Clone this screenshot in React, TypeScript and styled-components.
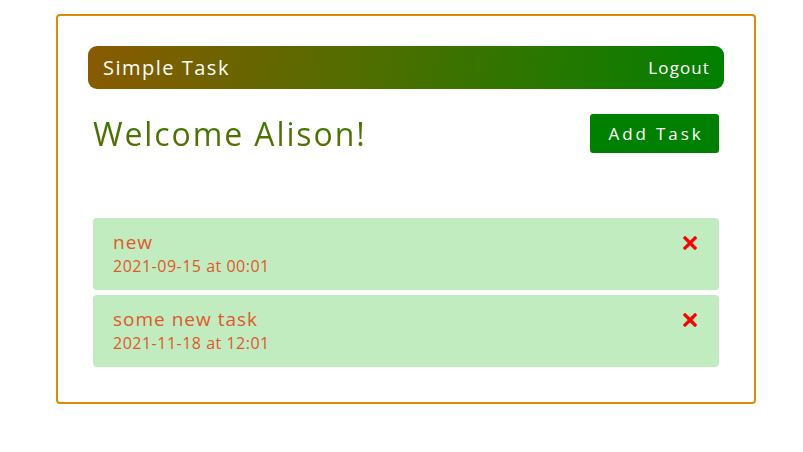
import React from "react";
import styled, { createGlobalStyle } from "styled-components";

const Global = createGlobalStyle`
  html, body { margin: 0; padding: 0; background: #fff; }
  body { font-family: "Open Sans", "Liberation Sans", sans-serif; }
  * { box-sizing: border-box; }
`;

const Page = styled.div`
  padding: 14px 0 0 56px;
`;

const Card = styled.div`
  width: 700px;
  height: 390px;
  border: 2px solid #dc8c06;
  border-radius: 4px;
  padding: 30px;
`;

const NavBar = styled.header`
  height: 43px;
  border-radius: 9px;
  background: linear-gradient(100deg, #8a5a00 0%, #4e6e00 45%, #008000 100%);
  display: flex;
  align-items: center;
  justify-content: space-between;
  padding: 0 15px;
  color: #fff;
`;

const Brand = styled.span`
  font-size: 20px;
  letter-spacing: 1.5px;
`;

const NavLink = styled.span`
  font-size: 17px;
  letter-spacing: 1.1px;
  margin-right: -1px;
`;

const Main = styled.main`
  padding: 0 5px;
`;

const TopRow = styled.div`
  display: flex;
  justify-content: space-between;
  align-items: flex-start;
  margin-top: 25px;
  height: 104px;
`;

const Welcome = styled.h1`
  margin: 0;
  font-size: 32px;
  font-weight: 400;
  line-height: 40px;
  letter-spacing: 1.9px;
  background: linear-gradient(180deg, #2a7e00 0%, #6a6800 100%);
  -webkit-background-clip: text;
  background-clip: text;
  color: transparent;
`;

const AddButton = styled.button`
  height: 39px;
  width: 129px;
  border: none;
  border-radius: 3px;
  background: #008000;
  color: #fff;
  font-family: inherit;
  font-size: 17px;
  letter-spacing: 2.9px;
  padding: 0 0 0 3px;
  cursor: pointer;
`;

const TaskList = styled.ul`
  list-style: none;
  margin: 0;
  padding: 0;
  display: flex;
  flex-direction: column;
  gap: 5px;
`;

const TaskItem = styled.li`
  height: 72px;
  border-radius: 4px;
  background: #c0ecc0;
  display: flex;
  justify-content: space-between;
  align-items: flex-start;
  padding: 11px 22px 0 20px;
  color: #e0582a;
`;

const TaskText = styled.div`
  display: flex;
  flex-direction: column;
`;

const TaskTitle = styled.span`
  font-size: 19px;
  line-height: 26px;
  letter-spacing: 1px;
`;

const TaskDate = styled.span`
  font-size: 16px;
  line-height: 22px;
  letter-spacing: 0.5px;
`;

const DeleteIcon = styled.svg`
  margin-top: 7px;
  width: 14px;
  height: 14px;
`;

const tasks = [
  { title: "new", date: "2021-09-15 at 00:01" },
  { title: "some new task", date: "2021-11-18 at 12:01" },
];

export default function App() {
  return (
    <>
      <Global />
      <Page>
        <Card>
          <NavBar>
            <Brand>Simple Task</Brand>
            <NavLink>Logout</NavLink>
          </NavBar>
          <Main>
            <TopRow>
              <Welcome>Welcome Alison!</Welcome>
              <AddButton>Add Task</AddButton>
            </TopRow>
            <TaskList>
              {tasks.map((t) => (
                <TaskItem key={t.title}>
                  <TaskText>
                    <TaskTitle>{t.title}</TaskTitle>
                    <TaskDate>{t.date}</TaskDate>
                  </TaskText>
                  <DeleteIcon viewBox="0 0 14 14">
                    <path d="M2 2 L12 12 M12 2 L2 12" stroke="#ff0000" strokeWidth="3.2" strokeLinecap="square" />
                  </DeleteIcon>
                </TaskItem>
              ))}
            </TaskList>
          </Main>
        </Card>
      </Page>
    </>
  );
}
